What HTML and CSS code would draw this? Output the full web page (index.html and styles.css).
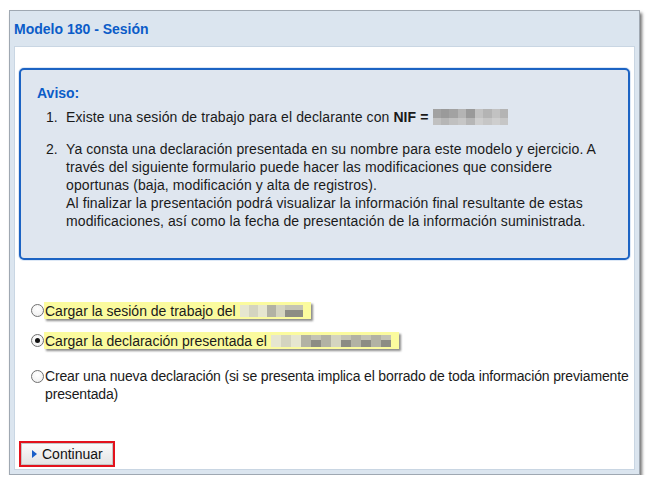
FILE: index.html
```html
<!DOCTYPE html>
<html lang="es">
<head>
<meta charset="utf-8">
<title>Modelo 180 - Sesión</title>
<link rel="stylesheet" href="styles.css">
</head>
<body>
<div class="panel">
  <div class="header"><h1 class="title">Modelo 180 - Sesión</h1></div>
  <div class="content">
    <div class="aviso">
      <div class="aviso-title">Aviso:</div>
      <ol class="list">
        <li class="item"><span class="num">1.</span><span class="txt">Existe una sesión de trabajo para el declarante con <b>NIF =</b> <span class="blur nif"><i class="b1"></i><i class="b2"></i><i class="b1"></i><i class="b3"></i><i class="b2"></i><i class="b4"></i><i class="b3"></i><i class="b4"></i><i class="b3"></i></span></span></li>
        <li class="item"><span class="num">2.</span><span class="txt">Ya consta una declaración presentada en su nombre para este modelo y ejercicio. A<br>través del siguiente formulario puede hacer las modificaciones que considere<br>oportunas (baja, modificación y alta de registros).<br>Al finalizar la presentación podrá visualizar la información final resultante de estas<br>modificaciones, así como la fecha de presentación de la información suministrada.</span></li>
      </ol>
    </div>

    <div class="options">
      <label class="opt">
        <span class="radio"></span>
        <span class="hl">Cargar la sesión de trabajo del <span class="blur row1"><i class="p1"></i><i class="p2"></i><i class="p1"></i><i class="p3"></i><i class="p2"></i><i class="p4"></i><i class="p4"></i></span></span>
      </label>
      <label class="opt">
        <span class="radio checked"></span>
        <span class="hl">Cargar la declaración presentada el <span class="blur row2"><i class="p1"></i><i class="p2"></i><i class="p1"></i><i class="p3"></i><i class="p4"></i><i class="p3"></i><i class="p2"></i><i class="p4"></i><i class="p3"></i><i class="p4"></i><i class="p3"></i><i class="p4"></i></span></span>
      </label>
      <label class="opt opt-wrap">
        <span class="radio"></span>
        <span class="plain">Crear una nueva declaración (si se presenta implica el borrado de toda información previamente<br>presentada)</span>
      </label>
    </div>

    <div class="actions">
      <div class="focus-ring">
        <button class="btn" type="button"><span class="tri"></span>Continuar</button>
      </div>
    </div>
  </div>
</div>
</body>
</html>
```

FILE: styles.css
```css
html, body {
  margin: 0;
  padding: 0;
  background: #ffffff;
}

body {
  font-family: "Liberation Sans", Arial, sans-serif;
  font-size: 14px;
  color: #1a1a1a;
}

.panel {
  box-sizing: border-box;
  width: 631px;
  height: 465px;
  margin: 10px 0 0 9px;
  border: 1px solid #9fa8b2;
  background: #dbe5ef;
  padding: 0 4px 4px 4px;
  display: flex;
  flex-direction: column;
  box-shadow: 2px 3px 3px rgba(0, 0, 0, 0.55);
}

.header {
  height: 35px;
  display: flex;
  align-items: center;
  flex: none;
}

.title {
  margin: 0;
  font-size: 14px;
  line-height: 18px;
  font-weight: bold;
  color: #0b5cc8;
}

.content {
  flex: 1;
  background: #ffffff;
  border: 1px solid #c9d6e3;
  padding: 21px 4px 0 4px;
  overflow: hidden;
}

.aviso {
  border: 2px solid #1c63c3;
  border-radius: 5px;
  background: #dfe6ef;
  padding: 14px 10px 28px 16px;
  box-shadow: 0 0 0 1px rgba(28, 99, 195, 0.15);
}

.aviso-title {
  font-weight: bold;
  color: #0b5cc8;
  line-height: 18px;
}

.list {
  list-style: none;
  margin: 6px 0 0 0;
  padding: 0 0 0 9px;
}

.item {
  display: flex;
  line-height: 18px;
}

.item + .item {
  margin-top: 14px;
}

.num {
  width: 20px;
  flex: none;
}

.txt {
  letter-spacing: 0.1px;
}

.blur {
  display: inline-flex;
  vertical-align: -3px;
}

.blur i {
  display: block;
}

.nif {
  height: 16px;
  width: 76px;
}

.nif i {
  flex: 1;
  height: 16px;
}

.nif .b1 { background: linear-gradient(#a2a2a2 55%, #c0c0c0 55%); }
.nif .b2 { background: linear-gradient(#9a9a9a 55%, #b6b6b6 55%); }
.nif .b3 { background: linear-gradient(#b4b4b4 55%, #c6c6c6 55%); }
.nif .b4 { background: linear-gradient(#c2c2c2 55%, #cecece 55%); }

.options {
  margin-top: 41px;
  padding-left: 12px;
}

.opt {
  display: flex;
  align-items: flex-start;
  line-height: 18px;
}

.opt + .opt {
  margin-top: 12px;
}

.opt-wrap {
  margin-top: 18px !important;
}

.radio {
  box-sizing: border-box;
  flex: none;
  width: 13px;
  height: 13px;
  margin-top: 3px;
  border: 1px solid #707070;
  border-radius: 50%;
  background: radial-gradient(circle at 50% 35%, #ffffff, #ececec);
  position: relative;
}

.radio.checked::after {
  content: "";
  position: absolute;
  left: 3px;
  top: 3px;
  width: 5px;
  height: 5px;
  border-radius: 50%;
  background: #111111;
}

.hl {
  display: inline-flex;
  align-items: center;
  height: 17px;
  margin-top: 1px;
  padding: 0 8px 0 1px;
  background: #fbfb9e;
  box-shadow: 2px 2px 2px rgba(0, 0, 0, 0.45);
  white-space: pre;
}

.plain {
  padding-left: 1px;
  white-space: nowrap;
  letter-spacing: -0.15px;
}

.row1, .row2 {
  height: 12px;
  vertical-align: 0;
}

.row1 i, .row2 i {
  height: 12px;
}

.row1 i { width: 9px; }
.row2 i { width: 10px; }

.p1 { background: #e6e6d0; }
.p2 { background: #d4d4c0; }
.p3 { background: #b2b2a4; }
.p4 { background: linear-gradient(#c4c4b4 40%, #8c8c84 40%); }

.actions {
  margin-top: 38px;
}

.focus-ring {
  display: inline-block;
  border: 2px solid #e3121c;
  margin-left: 0;
}

.btn {
  display: flex;
  align-items: center;
  height: 22px;
  width: 92px;
  margin: 0;
  padding: 0 0 0 10px;
  border: 1px solid #c4c4c4;
  background: linear-gradient(#fbfbfb, #e4e4e4);
  font-family: "Liberation Sans", Arial, sans-serif;
  font-size: 14px;
  color: #111111;
  cursor: pointer;
}

.tri {
  width: 0;
  height: 0;
  border-top: 4px solid transparent;
  border-bottom: 4px solid transparent;
  border-left: 5px solid #1b5fc8;
  margin-right: 5px;
}
```
